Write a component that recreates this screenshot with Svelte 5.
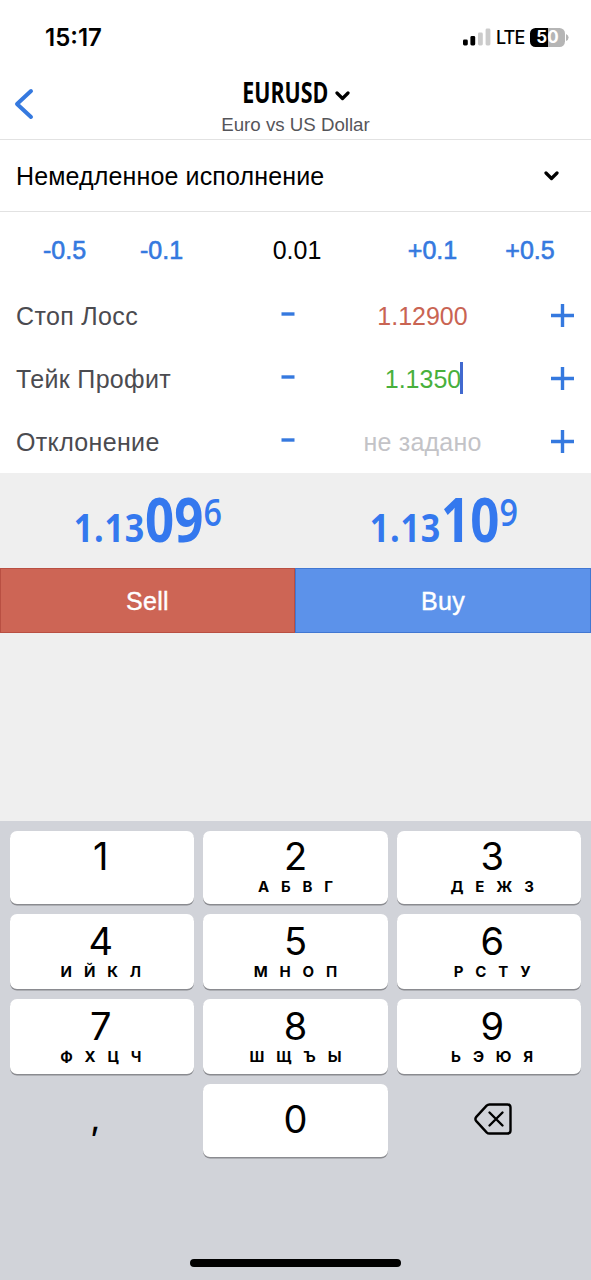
<script>
  let lots = ["-0.5", "-0.1", "0.01", "+0.1", "+0.5"];
  let fields = [
    { label: "Стоп Лосс", value: "1.12900", type: "red" },
    { label: "Тейк Профит", value: "1.1350", type: "green", active: true },
    { label: "Отклонение", value: "не задано", type: "empty" },
  ];
  let prices = [
    { start: "1.13", big: "09", small: "6" },
    { start: "1.13", big: "10", small: "9" },
  ];
  let keys = [
    { digit: "1", letters: "" },
    { digit: "2", letters: "А Б В Г" },
    { digit: "3", letters: "Д Е Ж З" },
    { digit: "4", letters: "И Й К Л" },
    { digit: "5", letters: "М Н О П" },
    { digit: "6", letters: "Р С Т У" },
    { digit: "7", letters: "Ф Х Ц Ч" },
    { digit: "8", letters: "Ш Щ Ъ Ы" },
    { digit: "9", letters: "Ь Э Ю Я" },
  ];
</script>

<main>
  <div class="status">
    <span class="time">15:17</span>
    <div class="indicators">
      <svg width="28" height="18" viewBox="0 0 28 18">
        <rect x="0" y="11.5" width="4.8" height="6" rx="1.4" />
        <rect x="7.4" y="8" width="4.8" height="9.5" rx="1.4" />
        <rect x="15" y="4.5" width="4.8" height="13" rx="1.4" fill="#cbcbcb" />
        <rect x="22.6" y="0.5" width="4.8" height="17" rx="1.4" fill="#cbcbcb" />
      </svg>
      <span class="lte">LTE</span>
      <div class="battery">50</div>
      <svg class="tip" width="3" height="7" viewBox="0 0 3 7">
        <path d="M0 0 Q2.6 1 2.6 3.5 Q2.6 6 0 7Z" fill="#b5b5b5" />
      </svg>
    </div>
  </div>

  <header>
    <svg class="back" width="20" height="32" viewBox="0 0 20 32">
      <path d="M17 3 L3 16 L17 29" />
    </svg>
    <div class="title">
      <div class="symbol">
        <b><span>EURUSD</span></b>
        <svg width="15" height="10" viewBox="0 0 15 10">
          <path d="M2 2 L7.5 7.5 L13 2" />
        </svg>
      </div>
      <div class="name">Euro vs US Dollar</div>
    </div>
  </header>

  <div class="execution">
    <span>Немедленное исполнение</span>
    <svg width="15" height="10" viewBox="0 0 15 10">
      <path d="M2 2 L7.5 7.5 L13 2" />
    </svg>
  </div>

  <div class="lots">
    {#each lots as lot}
      <span class={lot === "0.01" ? "current" : "step"}>{lot}</span>
    {/each}
  </div>

  {#each fields as field}
    <div class="field">
      <span class="label">{field.label}</span>
      <svg class="minus" width="14" height="4" viewBox="0 0 14 4">
        <path d="M0.5 2 H13.5" />
      </svg>
      <div class="value {field.type}">
        <span>{field.value}</span>
        {#if field.active}<i></i>{/if}
      </div>
      <svg class="plus" width="23" height="23" viewBox="0 0 23 23">
        <path d="M0 11.5 H23 M11.5 0 V23" />
      </svg>
    </div>
  {/each}

  <div class="prices">
    {#each prices as price}
      <div class="price">
        <span class="start">{price.start}</span><span class="big">{price.big}</span><span
          class="small">{price.small}</span
        >
      </div>
    {/each}
  </div>

  <div class="trade">
    <div class="sell">Sell</div>
    <div class="buy">Buy</div>
  </div>

  <div class="keyboard">
    <div class="keys">
      {#each keys as key}
        <div class="key">
          <span class="digit">{key.digit}</span>
          <span class="letters">{key.letters}</span>
        </div>
      {/each}
      <div class="plain comma">,</div>
      <div class="key zero"><span class="digit">0</span></div>
      <div class="plain delete">
        <svg width="38" height="32" viewBox="0 0 38 32">
          <path
            d="M15.5 1.5 H33.5 Q36.5 1.5 36.5 4.5 V27.5 Q36.5 30.5 33.5 30.5 H15.5 Q13.8 30.5 12.6 29.3 L2.3 18.1 Q0.5 16 2.3 13.9 L12.6 2.7 Q13.8 1.5 15.5 1.5Z"
          />
          <path d="M15.5 9.5 L28.5 22.5 M28.5 9.5 L15.5 22.5" />
        </svg>
      </div>
    </div>
    <div class="home"></div>
  </div>
</main>

<style>
  :global(body) {
    margin: 0;
  }
  main {
    width: 591px;
    height: 1280px;
    display: flex;
    flex-direction: column;
    overflow: hidden;
    background-color: #efefef;
    color: #000;
    font-family: "Liberation Sans", Arial, sans-serif;
    font-size: 25px;
  }
  svg {
    display: block;
  }
  .status {
    height: 74px;
    box-sizing: border-box;
    padding: 0 23px 0 45px;
    display: flex;
    align-items: center;
    justify-content: space-between;
    background-color: #fff;
    font-family: Inter, sans-serif;
  }
  .time {
    font-size: 24px;
    font-weight: 600;
  }
  .indicators {
    display: flex;
    align-items: center;
  }
  .lte {
    margin: 0 6px 0 5px;
    width: 28px;
    font-size: 18px;
    font-weight: 500;
    letter-spacing: -0.9px;
  }
  .battery {
    width: 35px;
    height: 19px;
    border-radius: 5.5px;
    background: linear-gradient(to right, #000 50%, #b5b5b5 50%);
    color: #fff;
    font-size: 17px;
    font-weight: 700;
    line-height: 19px;
    text-align: center;
  }
  .tip {
    margin-left: 1px;
    margin-right: -1px;
  }
  header {
    height: 65px;
    display: grid;
    grid-template-columns: 60px 1fr 60px;
    background-color: #fff;
    border-bottom: 1px solid #e2e2e2;
  }
  .back {
    margin: 14px 0 0 14px;
  }
  .back path {
    fill: none;
    stroke: #3579df;
    stroke-width: 4;
    stroke-linecap: round;
    stroke-linejoin: round;
  }
  .title {
    display: flex;
    flex-direction: column;
    align-items: center;
  }
  .symbol {
    height: 40px;
    display: flex;
    align-items: center;
    gap: 6px;
  }
  .symbol b {
    width: 87px;
    display: flex;
    justify-content: center;
    padding-bottom: 4px;
    font-family: "Open Sans", sans-serif;
    font-size: 28.5px;
    line-height: 36px;
  }
  .symbol b span {
    transform: scaleX(0.75);
  }
  .symbol svg {
    margin-top: 4px;
  }
  .symbol path,
  .execution path {
    fill: none;
    stroke: #000;
    stroke-width: 3.2;
    stroke-linecap: round;
    stroke-linejoin: round;
  }
  .name {
    color: #55555a;
    font-size: 18.7px;
    line-height: 22px;
  }
  .execution {
    height: 71px;
    padding: 0 32px 0 16px;
    display: flex;
    align-items: center;
    justify-content: space-between;
    background-color: #fff;
    border-bottom: 1px solid #e2e2e2;
  }
  .execution span {
    padding-top: 2px;
    letter-spacing: 0.14px;
  }
  .lots {
    height: 72px;
    box-sizing: border-box;
    padding: 4px 12px 0 16px;
    display: grid;
    grid-template-columns: 97px 97px 1fr 97px 98px;
    align-items: center;
    text-align: center;
    background-color: #fff;
  }
  .step {
    color: #3579df;
    -webkit-text-stroke: 0.6px #3579df;
  }
  .field {
    height: 63px;
    display: grid;
    grid-template-columns: 256px 64px 1fr 58px;
    align-items: center;
    justify-items: center;
    background-color: #fff;
  }
  .label {
    justify-self: start;
    padding: 1px 0 0 16px;
    color: #4b4b50;
    letter-spacing: 0.34px;
  }
  .field path {
    stroke: #3579df;
    stroke-width: 3.4;
  }
  .minus {
    margin-bottom: 3px;
  }
  .value {
    padding: 1px 8px 0 0;
    display: flex;
    align-items: center;
  }
  .value i {
    width: 3px;
    height: 32px;
    margin: 0 -2px 2px -1px;
    background-color: #4169cf;
  }
  .red {
    color: #c96453;
  }
  .green {
    color: #48b03c;
    padding-right: 7px;
  }
  .empty {
    color: #c3c3c7;
    letter-spacing: 0.2px;
  }
  .prices {
    height: 95px;
    display: grid;
    grid-template-columns: 1fr 1fr;
  }
  .price {
    display: flex;
    justify-content: center;
    align-items: baseline;
    color: #3478ee;
    font-family: "Open Sans", sans-serif;
    font-weight: 700;
    line-height: 92px;
    transform: scaleX(0.85);
  }
  .start {
    font-size: 40px;
    letter-spacing: 1px;
  }
  .big {
    font-size: 60px;
  }
  .small {
    font-size: 38px;
    font-weight: 600;
    align-self: flex-start;
    line-height: 76px;
  }
  .trade {
    height: 65px;
    display: grid;
    grid-template-columns: 295px 296px;
    color: #fff;
    line-height: 65px;
    letter-spacing: 0.3px;
    text-align: center;
  }
  .sell,
  .buy {
    box-sizing: border-box;
    height: 65px;
    border: 1px solid #b94f42;
    background-color: #cd6555;
    -webkit-text-stroke: 0.4px #fff;
  }
  .buy {
    border-color: #4177d2;
    background-color: #5c92ea;
  }
  .keyboard {
    margin-top: auto;
    height: 459px;
    display: flex;
    flex-direction: column;
    align-items: center;
    justify-content: space-between;
    background-color: #d1d3d9;
    font-family: Inter, sans-serif;
  }
  .keys {
    width: 571.5px;
    padding-top: 10px;
    display: grid;
    grid-template-columns: repeat(3, 1fr);
    grid-template-rows: 72.5px 74.5px 74.5px 73px;
    gap: 10.5px 9.5px;
  }
  .key {
    display: flex;
    flex-direction: column;
    align-items: center;
    justify-content: flex-end;
    padding-bottom: 8px;
    box-sizing: border-box;
    border-radius: 7px;
    background-color: #fff;
    box-shadow: 0 1.5px 0 #8a8b90;
  }
  .key:nth-child(3n + 1) {
    padding-right: 2px;
  }
  .key:nth-child(3n) {
    padding-left: 6px;
  }
  .digit {
    font-size: 38px;
    line-height: 40px;
  }
  .letters {
    height: 18px;
    margin-top: 2px;
    font-size: 15px;
    font-weight: 700;
    line-height: 18px;
    word-spacing: 8.3px;
  }
  .key.zero {
    justify-content: center;
    padding-bottom: 3px;
  }
  .plain {
    display: flex;
    align-items: center;
    justify-content: center;
  }
  .plain path {
    fill: none;
    stroke: #000;
    stroke-width: 2.4;
    stroke-linecap: round;
  }
  .delete {
    padding: 0 0 4px 8px;
  }
  .comma {
    padding: 0 13px 5px 0;
    font-size: 32px;
    font-weight: 500;
  }
  .home {
    width: 211px;
    height: 8px;
    margin-bottom: 13px;
    border-radius: 4px;
    background-color: #000;
  }
</style>
